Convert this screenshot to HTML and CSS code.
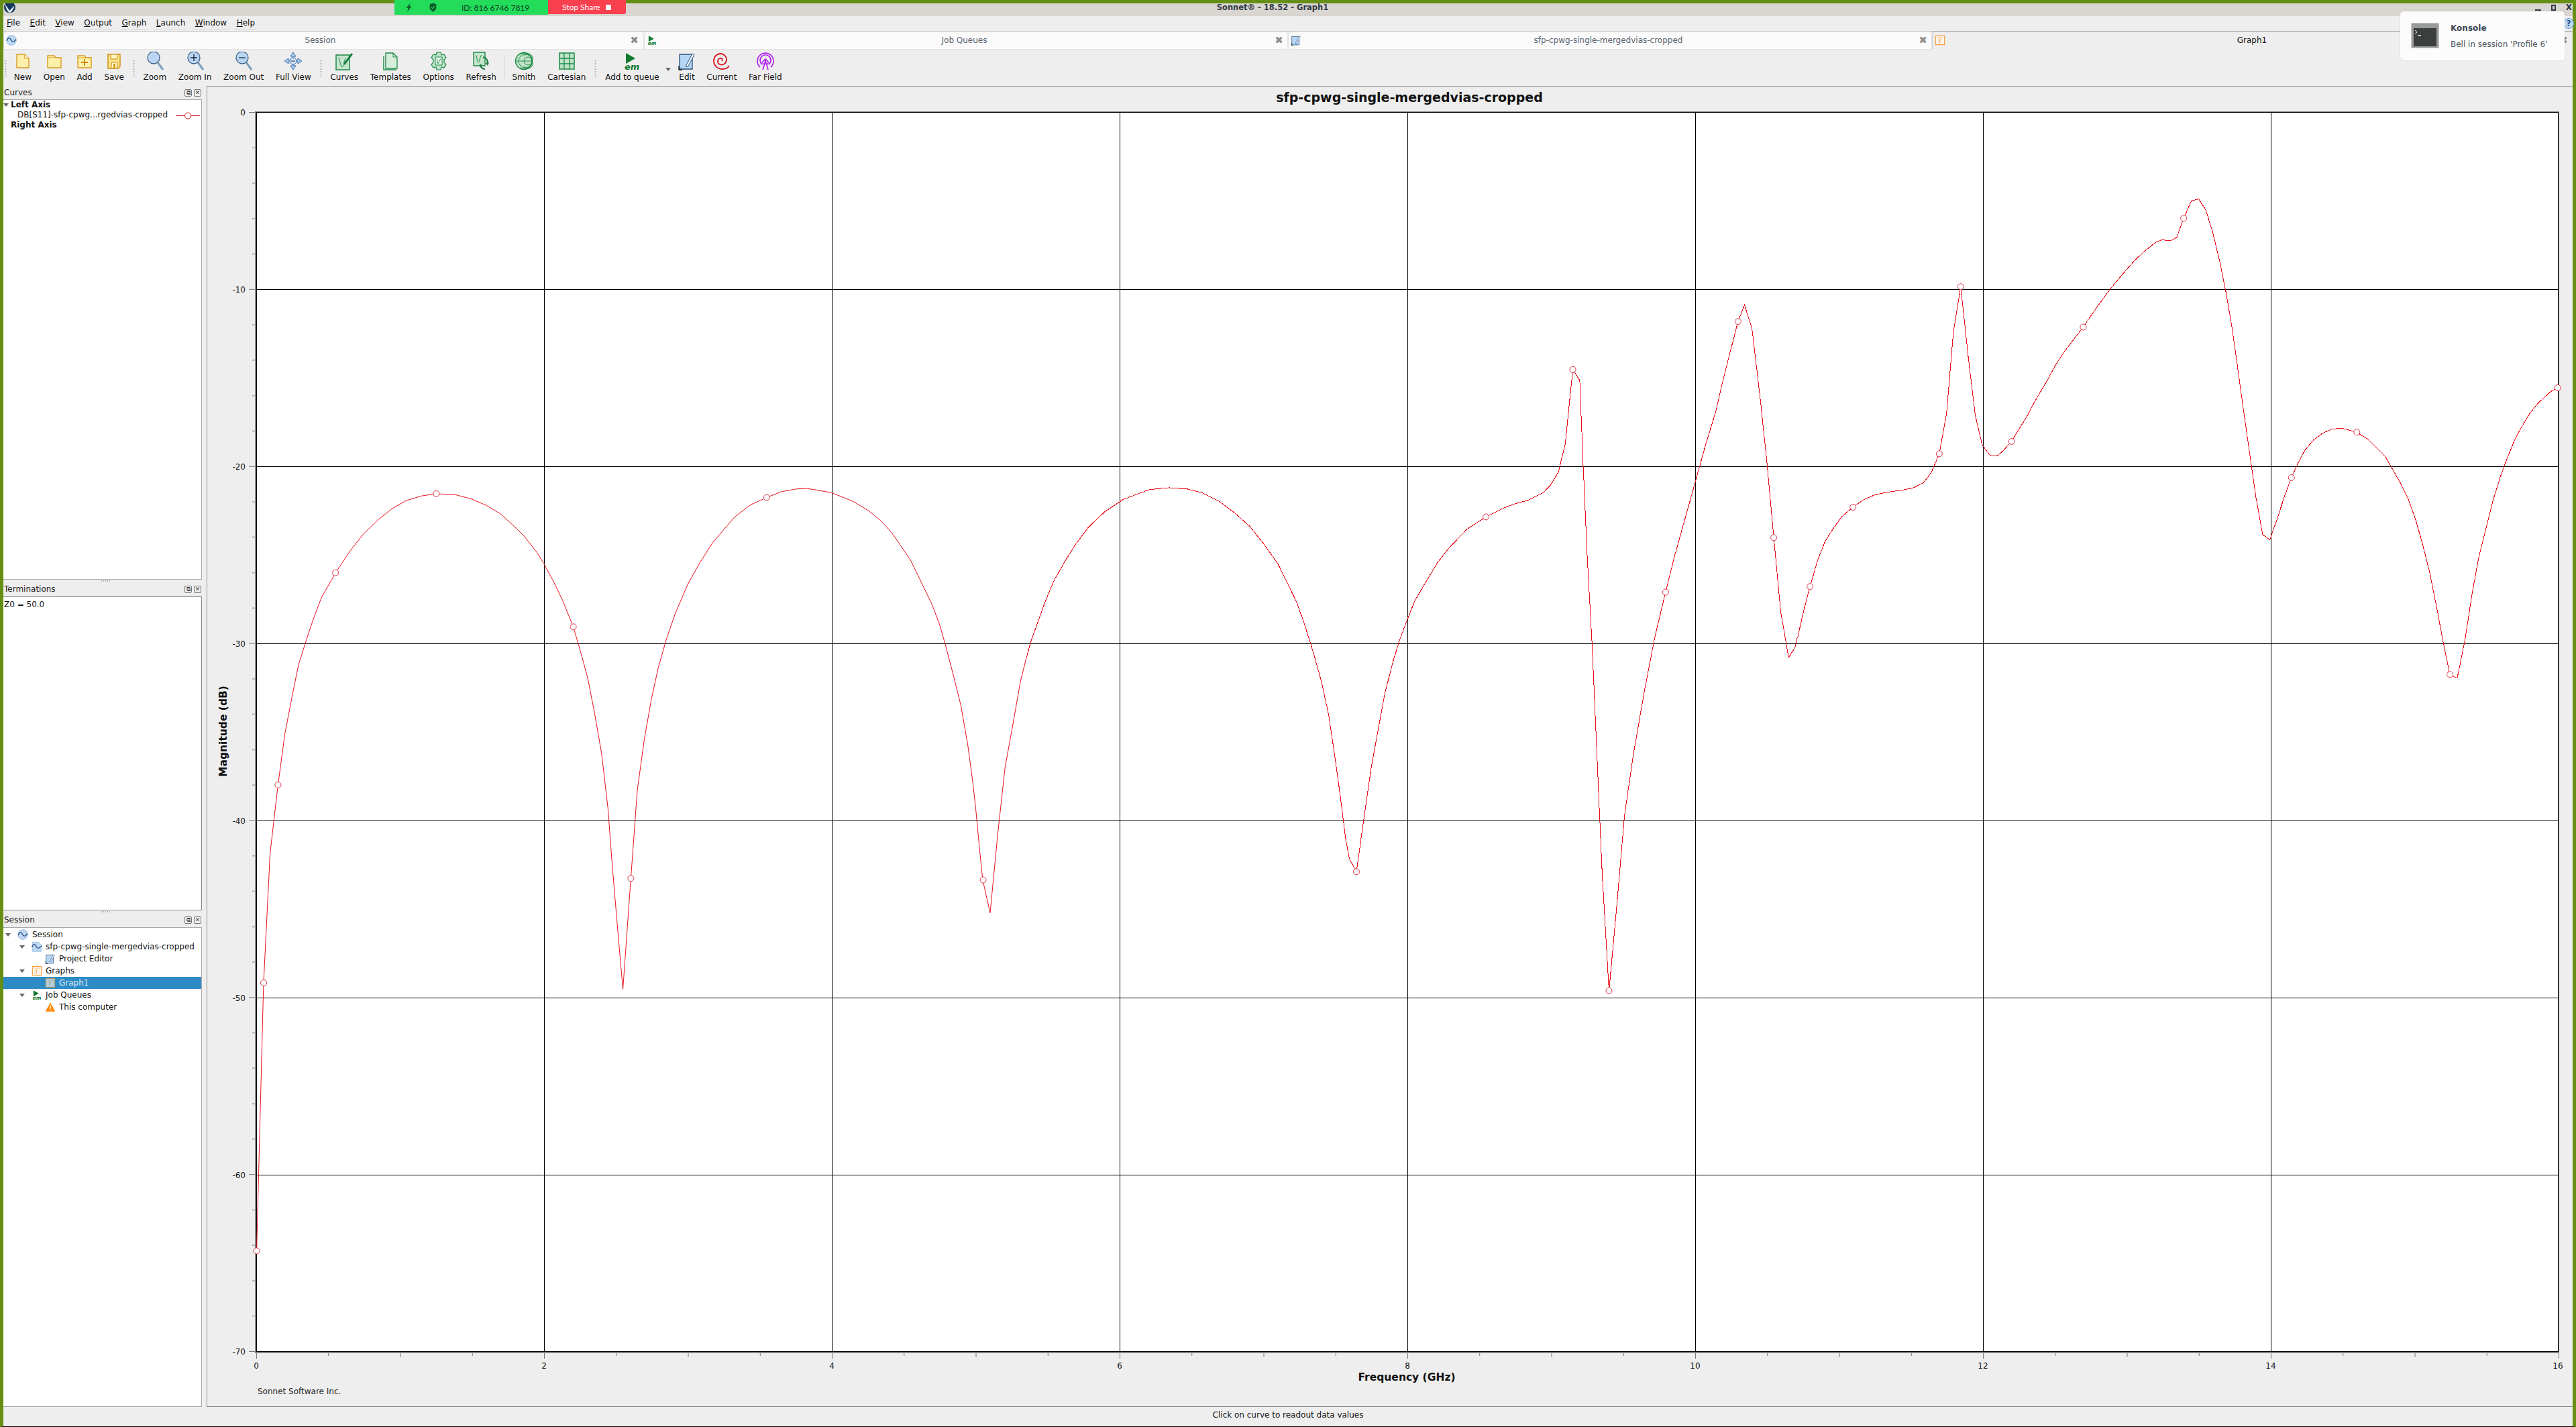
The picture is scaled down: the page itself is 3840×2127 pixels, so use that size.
FILE: index.html
```html
<!DOCTYPE html>
<html lang="en">
<head>
<meta charset="utf-8">
<title>Sonnet - Graph1</title>
<link rel="stylesheet" href="styles.css">
</head>
<body>
<svg class="defs" width="0" height="0" aria-hidden="true">
  <symbol id="ic-new" viewBox="0 0 28 28"><path d="M5 4h12l6 6v14H5z" fill="#fdf0aa" stroke="#d89b22" stroke-width="1.4"/><path d="M17 4v6h6" fill="#fff8d0" stroke="#d89b22" stroke-width="1.2"/></symbol>
  <symbol id="ic-open" viewBox="0 0 28 28"><path d="M4 9V6h10l2 3h8v15H4z" fill="#fdf0aa" stroke="#d89b22" stroke-width="1.4"/><path d="M4 9h20" stroke="#d89b22" stroke-width="1"/></symbol>
  <symbol id="ic-add" viewBox="0 0 28 28"><path d="M4 9V6h10l2 3h8v15H4z" fill="#fdf0aa" stroke="#d89b22" stroke-width="1.4"/><path d="M4 9h20" stroke="#d89b22"/><path d="M14 11v10M9 16h10" stroke="#c9860c" stroke-width="1.8"/></symbol>
  <symbol id="ic-save" viewBox="0 0 28 28"><path d="M5 4h18v18l-3 3H5z" fill="#fde68a" stroke="#c98a14" stroke-width="1.4"/><path d="M9 4h10v7H9z" fill="#fff4c2" stroke="#c98a14"/><path d="M10 16h9v9h-9z" fill="#fff4c2" stroke="#c98a14"/><path d="M13 18h3v7h-3z" fill="#d89b22"/></symbol>
  <symbol id="ic-zoom" viewBox="0 0 28 28"><path d="M18 16l8 11" stroke="#7f9fb8" stroke-width="3"/><circle cx="12" cy="9" r="9" fill="#b9d6f7" stroke="#44607f" stroke-width="1.3"/></symbol>
  <symbol id="ic-zin" viewBox="0 0 28 28"><path d="M18 16l8 11" stroke="#7f9fb8" stroke-width="3"/><circle cx="12" cy="9" r="9" fill="#b9d6f7" stroke="#44607f" stroke-width="1.3"/><path d="M12 4v10M7 9h10" stroke="#123" stroke-width="1.3"/></symbol>
  <symbol id="ic-zout" viewBox="0 0 28 28"><path d="M18 16l8 11" stroke="#7f9fb8" stroke-width="3"/><circle cx="12" cy="9" r="9" fill="#b9d6f7" stroke="#44607f" stroke-width="1.3"/><path d="M7 9h10" stroke="#123" stroke-width="1.3"/></symbol>
  <symbol id="ic-fit" viewBox="0 0 28 28"><path d="M14 1l4 6h-3v14h3l-4 6-4-6h3V7h-3z" fill="#a9cdf3" stroke="#3d6ea5"/><path d="M1 14l6-4v3h14v-3l6 4-6 4v-3H7v3z" fill="#a9cdf3" stroke="#3d6ea5"/><circle cx="14" cy="14" r="5" fill="#d3e6fa" stroke="#3d6ea5"/><path d="M11 14h6" stroke="#234"/></symbol>
  <symbol id="ic-curves" viewBox="0 0 28 28"><path d="M2 5h20v22H2z" fill="#c5e5cd" stroke="#1d8a45" stroke-width="1.5"/><path d="M5 9c3 0 3 14 6 14s2-10 6-14" fill="none" stroke="#1d8a45"/><path d="M13 18l12-16 2 2-12 16z" fill="#167a3c"/></symbol>
  <symbol id="ic-templates" viewBox="0 0 28 28"><path d="M7 2h11l6 6v17H7z" fill="#d7eedd" stroke="#1d8a45" stroke-width="1.3"/><path d="M18 2v6h6" fill="none" stroke="#1d8a45"/><path d="M4 7v20h19" fill="none" stroke="#1d8a45" stroke-width="1.5"/></symbol>
  <symbol id="ic-options" viewBox="0 0 28 28"><path d="M11 1h6l1 4 4-1 3 5-3 3v4l3 3-3 5-4-1-1 4h-6l-1-4-4 1-3-5 3-3v-4L3 9l3-5 4 1z" fill="#bfe3c8" stroke="#1d8a45" stroke-width="1.2"/><path d="M9 8h10v12H9z" fill="#e7f5ea" stroke="#1d8a45"/><path d="M11 11c1 0 1 7 2 7s1-5 4-7" fill="none" stroke="#1d8a45"/></symbol>
  <symbol id="ic-refresh" viewBox="0 0 28 28"><path d="M3 1h17v20H3z" fill="#c5e5cd" stroke="#1d8a45" stroke-width="1.4"/><path d="M6 5c2 0 2 11 4 11s2-8 5-11" fill="none" stroke="#1d8a45"/><path d="M17 8c5 1 8 5 6 10" fill="none" stroke="#167a3c" stroke-width="2"/><path d="M21 17l5-1-2 5z" fill="#167a3c"/><path d="M20 26c-4 0-7-3-7-7" fill="none" stroke="#167a3c" stroke-width="2"/><path d="M11 20l4-1-1 5z" fill="#167a3c"/></symbol>
  <symbol id="ic-smith" viewBox="0 0 28 28"><circle cx="14" cy="14" r="12.5" fill="#bfe3c8" stroke="#1d8a45" stroke-width="1.4"/><path d="M2 14h24M26 14A12 12 0 0 0 8 4M26 14A12 12 0 0 1 8 24M26 14A7 7 0 0 0 14 6M26 14A7 7 0 0 1 14 22M26 14a6 6 0 0 0-12 0 6 6 0 0 0 12 0M26 14a10 10 0 0 0-20 0 10 10 0 0 0 20 0" fill="none" stroke="#1d8a45" stroke-width=".9"/></symbol>
  <symbol id="ic-cart" viewBox="0 0 28 28"><path d="M3 2h22v24H3z" fill="#bfe3c8" stroke="#1d8a45" stroke-width="1.5"/><path d="M10 2v24M18 2v24M3 10h22M3 18h22" stroke="#1d8a45" stroke-width="1.3"/></symbol>
  <symbol id="ic-queue" viewBox="0 0 28 28"><path d="M5 2l14 8-14 8z" fill="#0f7a2e"/><text x="3" y="27" class="em">em</text></symbol>
  <symbol id="ic-edit" viewBox="0 0 28 28"><path d="M3 4h19v22H3z" fill="#b7d6f5" stroke="#27507c" stroke-width="1.3"/><path d="M13 20l9-17 3 1.6-9 17-3.400 1z" fill="#f4f9ff" stroke="#27507c"/><path d="M2 21v6h5" fill="none" stroke="#111" stroke-width="1.3"/></symbol>
  <symbol id="ic-current" viewBox="0 0 28 28"><path d="M14 14c2-2 0-5-3-4-4 1-4 7 0 9 5 2 10-2 10-7 0-5-4-9-9-9C6 3 2 8 2 14c0 7 6 12 13 12 4 0 8-2 10-5" fill="none" stroke="#d8121e" stroke-width="1.800"/></symbol>
  <symbol id="ic-far" viewBox="0 0 28 28"><g fill="none" stroke="#b01ff0" stroke-width="1.700"><path d="M6 23A12 12 0 1 1 22 23"/><path d="M9 19A8 8 0 1 1 19 19"/><path d="M11 19A4 4 0 1 1 17 19"/><path d="M10 27l4-13 4 13"/></g><circle cx="14" cy="12" r="1.800" fill="#b01ff0"/></symbol>
  <symbol id="ic-wave" viewBox="0 0 24 24"><circle cx="12" cy="12" r="11" fill="#bcd7f2" stroke="#7ba6d4"/><path d="M2 13c3-8 6-8 9-2s6 6 11-1" fill="none" stroke="#173f73" stroke-width="1.800"/></symbol>
  <symbol id="ic-project" viewBox="0 0 24 24"><path d="M2 2h13l7 6v15H2z" fill="#bcd7f2" stroke="#8fb6dc"/><path d="M1 13c3-8 6-8 9-2s6 6 13-1" fill="none" stroke="#173f73" stroke-width="1.800"/></symbol>
  <symbol id="ic-graph" viewBox="0 0 24 24"><path d="M2 2h20v20H2z" fill="#fdf3e4" stroke="#f2a040" stroke-width="1.800"/><path d="M6 6c3 0 3 0 4 3l1 10 1-10c1-3 3-3 6-3" fill="none" stroke="#f2b878" stroke-width="1.500"/></symbol>
  <symbol id="ic-warn" viewBox="0 0 24 24"><path d="M12 2l11 20H1z" fill="#ff8a0c"/><path d="M11 8h2v8h-2zM11 17.500h2v2.500h-2z" fill="#fff"/></symbol>
</svg>

<div class="screen">
  <header class="titlebar">
    <svg class="logo" viewBox="0 0 20 20"><circle cx="10" cy="7" r="10" fill="#17395f"/><path d="M2 2c3 4 6 8 8 11 2-3 5-6 8-9-1 6-5 11-8 13C7 15 3 9 2 2z" fill="#e8eef4"/></svg>
    <span class="title-text">Sonnet® - 18.52 - Graph1</span>
    <div class="win-btns"><span class="wb-min"></span><span class="wb-max"></span><span class="wb-close">X</span></div>
  </header>

  <nav class="menubar">
    <span class="menu"><u>F</u>ile</span><span class="menu"><u>E</u>dit</span><span class="menu"><u>V</u>iew</span><span class="menu"><u>O</u>utput</span><span class="menu"><u>G</u>raph</span><span class="menu"><u>L</u>aunch</span><span class="menu"><u>W</u>indow</span><span class="menu"><u>H</u>elp</span>
    <span class="help-ic">?</span>
  </nav>

  <div class="tabs">
    <div class="tab"><svg class="tab-ic"><use href="#ic-wave"/></svg><span>Session</span><b class="tab-x">✖</b></div>
    <div class="tab"><svg class="tab-ic"><use href="#ic-queue"/></svg><span>Job Queues</span><b class="tab-x">✖</b></div>
    <div class="tab"><svg class="tab-ic"><use href="#ic-edit"/></svg><span>sfp-cpwg-single-mergedvias-cropped</span><b class="tab-x">✖</b></div>
    <div class="tab active"><svg class="tab-ic"><use href="#ic-graph"/></svg><span>Graph1</span><b class="tab-x">✖</b></div>
  </div>

  <div class="toolbar">
    <i class="grip"></i>
    <div class="tool"><svg><use href="#ic-new"/></svg><span>New</span></div>
    <div class="tool"><svg><use href="#ic-open"/></svg><span>Open</span></div>
    <div class="tool"><svg><use href="#ic-add"/></svg><span>Add</span></div>
    <div class="tool"><svg><use href="#ic-save"/></svg><span>Save</span></div>
    <i class="grip"></i>
    <div class="tool"><svg><use href="#ic-zoom"/></svg><span>Zoom</span></div>
    <div class="tool"><svg><use href="#ic-zin"/></svg><span>Zoom In</span></div>
    <div class="tool"><svg><use href="#ic-zout"/></svg><span>Zoom Out</span></div>
    <div class="tool"><svg><use href="#ic-fit"/></svg><span>Full View</span></div>
    <i class="grip"></i>
    <div class="tool"><svg><use href="#ic-curves"/></svg><span>Curves</span></div>
    <div class="tool"><svg><use href="#ic-templates"/></svg><span>Templates</span></div>
    <div class="tool"><svg><use href="#ic-options"/></svg><span>Options</span></div>
    <div class="tool"><svg><use href="#ic-refresh"/></svg><span>Refresh</span></div>
    <i class="sep"></i>
    <div class="tool"><svg><use href="#ic-smith"/></svg><span>Smith</span></div>
    <div class="tool"><svg><use href="#ic-cart"/></svg><span>Cartesian</span></div>
    <i class="grip"></i>
    <div class="tool tool-drop"><svg><use href="#ic-queue"/></svg><span>Add to queue</span><em class="drop"></em></div>
    <div class="tool"><svg><use href="#ic-edit"/></svg><span>Edit</span></div>
    <div class="tool"><svg><use href="#ic-current"/></svg><span>Current</span></div>
    <div class="tool"><svg><use href="#ic-far"/></svg><span>Far Field</span></div>
  </div>

  <main class="main">
    <aside class="side">
      <section class="dock dock-curves">
        <div class="dock-head"><span>Curves</span><i class="dbtn">⧉</i><i class="dbtn">✕</i></div>
        <div class="dock-body">
          <div class="row-b"><em class="tri tri-a"></em>Left Axis</div>
          <div class="row-c"><span>DB[S11]-sfp-cpwg...rgedvias-cropped</span><svg class="legend" viewBox="0 0 36 12"><path d="M0 6.500h36" stroke="#d8121e"/><circle cx="18" cy="6.500" r="4.500" fill="#fff" stroke="#d8121e"/></svg></div>
          <div class="row-b">Right Axis</div>
        </div>
      </section>
      <section class="dock dock-term">
        <i class="hgrip"></i>
        <div class="dock-head"><span>Terminations</span><i class="dbtn">⧉</i><i class="dbtn">✕</i></div>
        <div class="dock-body"><div class="term">Z0 = 50.0</div></div>
      </section>
      <section class="dock dock-session">
        <i class="hgrip"></i>
        <div class="dock-head"><span>Session</span><i class="dbtn">⧉</i><i class="dbtn">✕</i></div>
        <div class="dock-body tree">
          <div class="node l0"><em class="tri"></em><svg><use href="#ic-wave"/></svg>Session</div>
          <div class="node l1"><em class="tri"></em><svg><use href="#ic-project"/></svg>sfp-cpwg-single-mergedvias-cropped</div>
          <div class="node l2"><svg><use href="#ic-edit"/></svg>Project Editor</div>
          <div class="node l1"><em class="tri"></em><svg><use href="#ic-graph"/></svg>Graphs</div>
          <div class="node l2 sel"><svg><use href="#ic-graph"/></svg>Graph1</div>
          <div class="node l1"><em class="tri"></em><svg><use href="#ic-queue"/></svg>Job Queues</div>
          <div class="node l2"><svg><use href="#ic-warn"/></svg>This computer</div>
        </div>
      </section>
    </aside>

    <section class="graph">
      <svg class="chart" viewBox="308 128 3527 1968" width="3527" height="1968">
        <defs>
          <pattern id="xt" patternUnits="userSpaceOnUse" x="382" y="2017" width="429" height="9"><path d="M.5 0v8M107.750 0v4M215 0v6M322.250 0v4" stroke="#777"/></pattern>
          <pattern id="yt" patternUnits="userSpaceOnUse" x="371" y="167" width="11" height="263.860"><path d="M0 .5h11M5 53.270h6M5 106.040h6M5 158.820h6M5 211.590h6" stroke="#777"/></pattern>
        </defs>
        <text x="2101" y="152" class="c-title">sfp-cpwg-single-mergedvias-cropped</text>
        <rect x="371" y="167" width="11" height="1848" fill="url(#yt)"/>
        <rect x="382" y="2017" width="3433" height="9" fill="url(#xt)"/>
        <rect x="380" y="166" width="3435" height="1851" fill="#808080"/>
        <rect x="382" y="167" width="3432" height="1848" fill="#fff"/>
        <path class="grid" d="M811.500 167V2014M1240.500 167V2014M1669.500 167V2014M2098.500 167V2014M2527.500 167V2014M2956.500 167V2014M3385.500 167V2014"/>
        <path class="grid" d="M382 431.500H3813M382 695.500H3813M382 959.500H3813M382 1223.500H3813M382 1487.500H3813M382 1751.500H3813"/>
        <rect class="frame" x="382.500" y="167.500" width="3431" height="1847"/>

        <g transform="translate(370 660) scale(.7398 .7908)"><polyline class="curve" points="17,1523 31,1018 44,775 60,645 74,548 88,480 101,420 117,372 132,330 148,291 176,245 205,204 232,172 262,145 290,124 318,109 350,100 379,96 418,98 450,106 480,118 510,135 533,155 556,176 582,207 597,230 616,263 634,298 655,347 668,388 684,443 698,510 712,585 725,690 733,790 742,890 755,1030 771,821 784,655 798,560 812,485 826,425 842,372 860,323 885,268 910,226 936,188 980,140 1012,117 1045,103 1075,92 1105,87 1125,86 1145,89 1175,94 1218,110 1250,128 1275,147 1297,170 1334,220 1360,270 1378,305 1394,345 1406,385 1420,435 1436,495 1450,570 1460,640 1466,690 1473,760 1480,824 1495,886 1510,740 1525,612 1540,535 1556,450 1568,405"/></g>
        <g transform="translate(1530 400) scale(.7398 .7015)"><polyline class="curve" points="0,827 10,790 38,708 55,665 78,622 100,585 125,550 158,517 195,491 248,470 288,466 325,469 355,477 390,496 420,520 450,548 478,585 507,628 525,667 545,710 560,755 578,815 595,880 609,948 622,1040 633,1125 643,1210 651,1255 665,1282 680,1170 695,1060 708,985 722,905 738,838 752,790 768,745 782,708 800,675 828,626 850,596 888,554 926,528 960,510 985,500 1010,493 1042,476 1056,461 1072,433 1086,372 1101,215 1115,238 1122,420 1130,610 1140,800 1150,1040 1160,1280 1174,1535 1190,1350 1205,1165 1222,1040 1245,900 1266,785 1288,688 1306,612 1325,540 1347,457 1370,370 1389,305 1402,245 1420,170 1434,113 1447,78 1462,127 1478,270 1492,410 1506,572 1520,730 1536,827 1549,805 1554,782"/></g>
        <g transform="translate(2680 260) scale(.7270 .5102)"><polyline class="curve" points="0,1350 12,1275 25,1204 40,1130 55,1075 70,1040 90,1000 113,972 135,950 158,936 185,928 215,922 238,915 258,900 274,870 290,816 305,698 319,460 334,328 350,540 364,705 378,790 394,821 408,823 422,806 438,780 470,706 484,668 512,600 527,560 548,515 585,446 612,390 640,336 665,293 690,252 712,223 735,197 747,191 763,194 777,184 791,128 807,77 822,72 836,102 850,165 866,260 878,345 890,445 900,545 912,670 925,800 939,940 953,1052 968,1067 982,1010 998,940 1012,886 1025,845 1040,805 1058,775 1075,757 1095,744 1115,741 1146,753 1170,775 1205,825 1235,900 1252,950 1266,1005 1280,1075 1296,1165 1310,1265 1323,1365 1337,1461 1352,1472 1368,1360 1382,1230 1396,1120 1410,1040 1425,955 1440,885 1453,835 1470,775 1485,735 1500,700 1518,668 1543,635 1558,623"/></g>

        <g class="markers">
          <circle cx="382.600" cy="1864.400" r="4.500"/><circle cx="393" cy="1465" r="4.500"/><circle cx="414.400" cy="1170" r="4.500"/><circle cx="500.200" cy="853.700" r="4.500"/><circle cx="650.400" cy="736" r="4.500"/><circle cx="854.600" cy="934.400" r="4.500"/><circle cx="940.400" cy="1309.200" r="4.500"/><circle cx="1143" cy="741.500" r="4.500"/><circle cx="1465.600" cy="1311.600" r="4.500"/>
          <circle cx="2022" cy="1299.300" r="4.500"/><circle cx="2215" cy="770.400" r="4.500"/><circle cx="2344.500" cy="550.800" r="4.500"/><circle cx="2398.500" cy="1476.800" r="4.500"/><circle cx="2482.900" cy="882.600" r="4.500"/><circle cx="2590.900" cy="479.300" r="4.500"/><circle cx="2644.100" cy="801.300" r="4.500"/>
          <circle cx="2698.200" cy="874.300" r="4.500"/><circle cx="2762.200" cy="756" r="4.500"/><circle cx="2890.900" cy="676.300" r="4.500"/><circle cx="2922.900" cy="427.300" r="4.500"/><circle cx="2998.500" cy="658" r="4.500"/><circle cx="3105.400" cy="487.500" r="4.500"/><circle cx="3255.100" cy="325.300" r="4.500"/><circle cx="3415.800" cy="712" r="4.500"/><circle cx="3513.300" cy="644.200" r="4.500"/><circle cx="3652.100" cy="1005.400" r="4.500"/><circle cx="3812.800" cy="577.900" r="4.500"/>
        </g>

        <g class="y-labels">
          <text x="366" y="172">0</text><text x="366" y="436">-10</text><text x="366" y="700">-20</text><text x="366" y="964">-30</text><text x="366" y="1228">-40</text><text x="366" y="1492">-50</text><text x="366" y="1756">-60</text><text x="366" y="2019">-70</text>
        </g>
        <g class="x-labels">
          <text x="382" y="2040">0</text><text x="811" y="2040">2</text><text x="1240" y="2040">4</text><text x="1669" y="2040">6</text><text x="2098" y="2040">8</text><text x="2527" y="2040">10</text><text x="2956" y="2040">12</text><text x="3385" y="2040">14</text><text x="3813" y="2040">16</text>
        </g>
        <text x="2097" y="2058" class="c-axis">Frequency (GHz)</text>
        <text transform="translate(338 1090) rotate(-90)" class="c-axis">Magnitude (dB)</text>
        <text x="384" y="2078" class="c-foot">Sonnet Software Inc.</text>
      </svg>
    </section>
  </main>

  <footer class="status">Click on curve to readout data values</footer>
</div>

<div class="share">
  <div class="share-id">
    <svg class="share-ic" viewBox="0 0 16 18"><path d="M11 1L3 10h4l-2 7 8-10H9z" fill="#0b5a2a"/></svg>
    <svg class="share-ic" viewBox="0 0 16 18"><path d="M8 1l6 2v6c0 4-3 6-6 8-3-2-6-4-6-8V3z" fill="#0b5a2a"/><path d="M5 9l2 2 4-4" fill="none" stroke="#22dc5a" stroke-width="1.500"/></svg>
    <span class="share-num">ID: 816 6746 7819</span>
  </div>
  <div class="share-stop">Stop Share<i class="stop-sq"></i></div>
</div>

<aside class="toast">
  <svg class="toast-ic" viewBox="0 0 42 38"><rect x=".5" y=".5" width="41" height="37" fill="#9a9a9a"/><rect x="4" y="8" width="34" height="27" fill="#3a3f3d"/><path d="M6 11l3 3-3 3" fill="none" stroke="#eee"/><path d="M10 19h5" stroke="#eee" stroke-width="1.500"/></svg>
  <div class="toast-text"><strong>Konsole</strong><span>Bell in session 'Profile 6'</span></div>
</aside>
</body>
</html>
```
FILE: styles.css
```css
* { box-sizing: border-box; }
html, body { margin: 0; height: 2127px; overflow: hidden; }
body { position: relative; font: 12px/15px "DejaVu Sans", sans-serif; color: #111; background: #eee; }
.defs { display: none; }

.screen {
  display: flex; flex-direction: column; height: 2127px;
  border-top: 5px solid #648f14; border-left: 5px solid #648f14; border-right: 5px solid #648f14;
  border-bottom: 1px solid #000; background: #eee;
}

/* title bar */
.titlebar { height: 19px; flex: none; background: #d9d5d1; display: flex; align-items: flex-start; position: relative; justify-content: center; padding-right: 46px; }
.logo { position: absolute; left: 0; top: 0; width: 19px; height: 17px; }
.title-text { font-weight: 700; font-size: 11.500px; line-height: 12px; color: #2f3a44; }
.win-btns { position: absolute; right: 1px; top: 0; height: 12px; display: flex; align-items: center; gap: 15px; }
.wb-min { width: 9px; height: 2px; background: #2f3a44; margin-top: 7px; }
.wb-max { width: 7px; height: 9px; border: 2px solid #2f3a44; }
.wb-close { font-weight: 700; font-size: 12px; line-height: 12px; color: #2f3a44; }

/* menu */
.menubar { height: 22px; flex: none; display: flex; padding-left: 2px; position: relative; align-items: flex-start; }
.menu { padding: 3px 3px 1px; margin-right: 8.500px; height: 20px; border-bottom: 1px solid #d8d8d8; line-height: 15px; }
.help-ic { position: absolute; right: -2px; top: 3px; width: 16px; height: 16px; border-radius: 50%; background: #bcd7f2; border: 1px solid #6a9bd0; color: #1c4f86; font-size: 12px; line-height: 14px; text-align: center; font-weight: 700; }

/* tabs */
.tabs { height: 28px; flex: none; display: grid; grid-template-columns: 955fr 960fr 960fr 955fr; border-top: 1px solid #bcbcbc; }
.tab { display: grid; grid-template-columns: 20px 1fr 25px; align-items: center; height: 27px; background: #fafafa; border: 1px solid #e2e2e2; border-top: 0; border-radius: 6px 6px 0 0; color: #5a6672; text-align: center; }
.tab:first-child { grid-template-columns: 17px 1fr 27px; }
.tab.active { grid-template-columns: 24px 1fr 25px; background: #eee; border-color: #eee #eee #eee #ccc; color: #111; border-top: 1px solid #9a9a9a; margin-top: -1px; height: 28px; }
.tab-ic { width: 16px; height: 16px; margin-left: 3px; }
.tab-x { font-size: 15px; font-weight: 400; color: #8d8d8d; }

/* toolbar */
.toolbar { height: 54px; flex: none; display: flex; align-items: flex-start; }
.grip { width: 3px; height: 26px; margin: 15px 4px 0; background: radial-gradient(circle, #b0b0b0 1px, transparent 1.200px) 0 0 / 3px 4px; flex: none; }
.grip:first-child { margin: 15px 2px 0; }
.sep { width: 1px; height: 34px; margin: 8px 2.500px 0; background: #d0d0d0; flex: none; }
.tool { flex: none; padding: 3px 8.850px 0; display: flex; flex-direction: column; align-items: center; position: relative; }
.tool svg { width: 28px; height: 28px; display: block; margin: 0 -14px; }
.tool span { margin-top: 3px; white-space: nowrap; }
.tool-drop { margin-right: 12px; }
.drop { position: absolute; right: -8px; top: 27px; border: 4px solid transparent; border-top: 5px solid #666; }
.em { font: italic 700 13px "DejaVu Sans", sans-serif; fill: #0f7a2e; }

/* main */
.main { flex: 1; display: flex; min-height: 0; }
.side { width: 296px; flex: none; display: flex; flex-direction: column; margin-right: 7px; }
.dock { display: flex; flex-direction: column; position: relative; }
.dock-curves { height: 736px; }
.dock-term { height: 493px; }
.dock-session { flex: 1; min-height: 0; }
.dock-head { height: 20px; flex: none; display: flex; align-items: center; padding-left: 1px; color: #222; }
.dock-head span { flex: 1; }
.dock-term .dock-head, .dock-session .dock-head { height: 25px; padding-top: 4px; }
.dbtn { width: 11px; height: 11px; margin-left: 3px; border: 1px solid #777; border-radius: 2px; font: 9px/9px "DejaVu Sans", sans-serif; text-align: center; color: #444; }
.dbtn:last-child { margin-right: 1px; }
.dock-body { flex: 1; background: #fff; border: 1px solid #aaa; border-left: 0; min-height: 0; }
.dock-term .dock-body { border-color: #888; }
.hgrip { position: absolute; left: 145px; top: 1px; width: 16px; height: 2px; background: radial-gradient(circle, #aaa 1px, transparent 1px) 0 0 / 3px 2px; }

.tri { width: 0; height: 0; border: 4px solid transparent; border-top: 5px solid #666; margin-top: 5px; flex: none; }
.row-b { height: 15px; font-weight: 700; padding-left: 11px; position: relative; }
.tri-a { position: absolute; left: 0; top: 0; }
.row-c { height: 15px; padding-left: 21px; display: flex; justify-content: space-between; align-items: center; padding-right: 2px; }
.legend { width: 36px; height: 12px; }
.term { padding: 4px 1px; }

.tree { padding-top: 1px; }
.node { height: 18px; display: flex; align-items: center; line-height: 18px; white-space: nowrap; }
.node svg { width: 16px; height: 16px; margin-right: 5px; flex: none; }
.node .tri { margin: 5px 5px 0 0; }
.l0 { padding-left: 3px; }
.l0 svg { margin-left: 5px; margin-right: 6px; }
.l1 { padding-left: 24px; }
.node.l1 .tri { margin-right: 10px; }
.l2 { padding-left: 62px; }
.sel { background: #2d8bc6; color: #dfeaf3; }
.sel svg { opacity: .65; }

/* graph */
.graph { flex: 1; min-width: 0; border-top: 1px solid #8a8a8a; border-left: 1px solid #8a8a8a; border-bottom: 1px solid #8a8a8a; }
.chart { display: block; margin: -1px 0 0 -1px; }
.grid { stroke: #000; stroke-width: 1; fill: none; }
.frame { fill: none; stroke: #000; stroke-width: 1; }
.curve { fill: none; stroke: #e8101c; stroke-width: 1; vector-effect: non-scaling-stroke; shape-rendering: crispEdges; }
.markers circle { fill: #fff; stroke: #dc3545; stroke-width: 1; }
.c-title { font: 700 19px "DejaVu Sans", sans-serif; text-anchor: middle; fill: #111; }
.c-axis { font: 700 15.500px "DejaVu Sans", sans-serif; text-anchor: middle; fill: #111; }
.c-foot { font: 12px "DejaVu Sans", sans-serif; fill: #222; }
.y-labels text { font: 12px "DejaVu Sans", sans-serif; text-anchor: end; fill: #111; }
.x-labels text { font: 12px "DejaVu Sans", sans-serif; text-anchor: middle; fill: #111; }

/* status */
.status { height: 29px; flex: none; text-align: center; line-height: 24px; }

/* overlays */
.share { position: absolute; left: 588px; top: 0; width: 345px; height: 22px; display: flex; }
.share-id { width: 229px; height: 22px; background: #22dc5a; display: flex; align-items: center; padding-left: 15px; gap: 23px; }
.share-ic { width: 13px; height: 16px; }
.share-num { margin-left: 13px; font: 12px "Lato", sans-serif; color: #0e3a22; }
.share-stop { flex: 1; height: 21px; background: #f9404f; color: #fff; border-radius: 0 0 3px 0; display: flex; align-items: center; padding-left: 21px; gap: 8px; font: 12px "Lato", sans-serif; }
.stop-sq { width: 8px; height: 8px; background: #fff; border-radius: 1px; }

.toast { position: absolute; left: 3578px; top: 17px; width: 245px; height: 73px; background: #fcfcfc; border-radius: 5px; box-shadow: 0 0 2px rgba(0,0,0,.15); display: flex; padding: 17px 0 0 16px; gap: 17px; }
.toast-ic { width: 42px; height: 38px; flex: none; }
.toast-text { display: flex; flex-direction: column; gap: 9px; color: #4b5560; padding-top: 1px; white-space: nowrap; }
.toast-text strong { font-size: 12px; color: #3f4954; }
```
